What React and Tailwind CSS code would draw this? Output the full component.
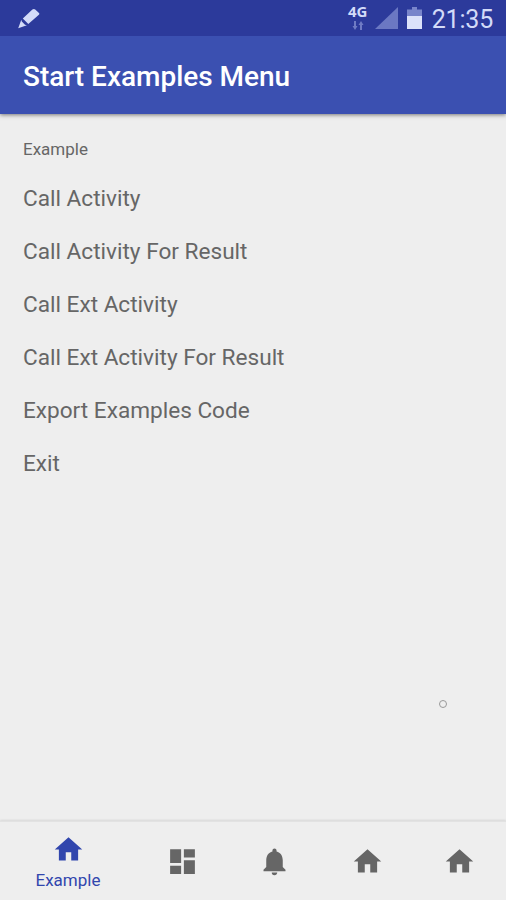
import { MdHome, MdDashboard, MdNotifications } from 'react-icons/md';

const menuItems = [
  'Call Activity',
  'Call Activity For Result',
  'Call Ext Activity',
  'Call Ext Activity For Result',
  'Export Examples Code',
  'Exit',
];

const tabs = [
  { id: 'dashboard', Icon: MdDashboard },
  { id: 'notifications', Icon: MdNotifications },
  { id: 'home-2', Icon: MdHome },
  { id: 'home-3', Icon: MdHome },
];

function StatusBar() {
  return (
    <div className="z-20 flex h-9 shrink-0 items-center justify-between bg-[#2c3a9b] pl-[17px] pr-[13px] text-[#d3dbf8]">
      <svg width="24" height="24" viewBox="0 0 24 24" fill="currentColor">
        <path d="M15.4 3.6 5.8 12.5l5.5 5.6L21.900 8.700c.6-.6.6-1.200.1-1.800L18.200 3.500c-.9-.8-1.900-.7-2.800.1z" />
        <path d="M4.300 13.800 1.200 22.300l8.700-3-1.900-.6-3.200-3.100z" />
      </svg>
      <div className="flex items-center">
        <div className="flex h-7 w-5 flex-col items-center">
          <span className="font-['Open_Sans',sans-serif] text-[15px] leading-[15px] font-bold">4G</span>
          <svg className="mt-0.5" width="12" height="9" viewBox="0 0 12 9" fill="#6f7bc4">
            <path d="M2 0h2v5h1.500L3 9 .5 5H2zM8 9h2V4h1.500L9 0 6.500 4H8z" />
          </svg>
        </div>
        <svg className="ml-[7px]" width="23" height="24" viewBox="0 0 23 24" fill="#6b78c3">
          <path d="M23 1v22H0z" />
        </svg>
        <svg className="ml-[9px]" width="15" height="24" viewBox="0 0 15 24">
          <path d="M5 1h5v2.500h5V10H0V3.500h5z" fill="#7985cb" />
          <path d="M0 10h15v13H0z" fill="#dce2fa" />
        </svg>
        <span className="ml-2.5 pt-1 text-[25px] leading-[34px] tracking-[-0.2px]">21:35</span>
      </div>
    </div>
  );
}

export default function App() {
  return (
    <div className="flex h-[900px] w-[506px] flex-col overflow-hidden bg-[#eeeeee] font-[Roboto,sans-serif]">
      <StatusBar />
      <header className="z-10 flex h-[78px] shrink-0 items-center bg-[#3b50b1] px-[23px] pt-1 text-white shadow-[0_1px_4px_rgba(0,0,0,0.5)]">
        <h1 className="text-[28px] leading-10 font-medium tracking-[-0.02px]">Start Examples Menu</h1>
      </header>

      <main className="relative flex-1 px-[23px] pt-[23px] text-[#666666]">
        <h2 className="h-[35px] text-[17px] leading-6">Example</h2>
        <ul>
          {menuItems.map((item) => (
            <li key={item} className="h-[53px] text-[22.6px] leading-[53px]">
              {item}
            </li>
          ))}
        </ul>
        <span className="absolute top-[586px] left-[439px] size-2 rounded-full border-[1.5px] border-[#999999]" />
      </main>

      <nav className="flex h-[79px] shrink-0 border-t border-[#e2e2e2] text-[#666666] shadow-[0_-1px_2px_rgba(0,0,0,0.1)]">
        <button className="flex w-[136px] flex-col items-center pt-[11px] text-[#3146ad]">
          <MdHome size={33} />
          <span className="text-[17px] leading-[29px]">Example</span>
        </button>
        {tabs.map(({ id, Icon }) => (
          <button key={id} className="flex flex-1 items-center justify-center">
            <Icon size={33} />
          </button>
        ))}
      </nav>
    </div>
  );
}
